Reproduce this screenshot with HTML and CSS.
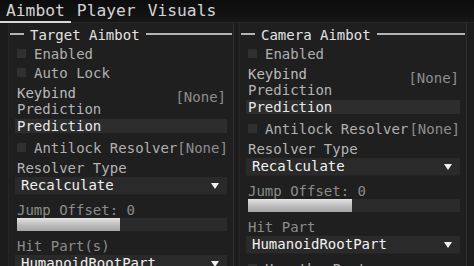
FILE: index.html
```html
<!DOCTYPE html>
<html>
<head>
<meta charset="utf-8">
<link rel="stylesheet" href="styles.css">
</head>
<body>
<div class="tabs">
  <div class="tab active">Aimbot</div>
  <div class="tab">Player</div>
  <div class="tab">Visuals</div>
</div>
<div class="main">
  <div class="group left">
    <div class="gtitle"><span class="gline short"></span><span class="gtext">Target Aimbot</span><span class="gline"></span></div>
    <div class="check"><span class="box"></span><span>Enabled</span></div>
    <div class="check"><span class="box"></span><span>Auto Lock</span></div>
    <div class="keybind"><span>Keybind</span><span class="none">[None]</span></div>
    <div class="label">Prediction</div>
    <div class="input">Prediction</div>
    <div class="check anti"><span class="box"></span><span>Antilock Resolver</span><span class="none push">[None]</span></div>
    <div class="label gap3">Resolver Type</div>
    <div class="drop"><span>Recalculate</span><span class="tri"></span></div>
    <div class="label dim gap7">Jump Offset:&nbsp;0</div>
    <div class="slider"><div class="fill" style="width:49%"></div></div>
    <div class="label dim gap7">Hit Part(s)</div>
    <div class="drop"><span>HumanoidRootPart</span><span class="tri"></span></div>
  </div>
  <div class="group right">
    <div class="gtitle"><span class="gline short"></span><span class="gtext">Camera Aimbot</span><span class="gline"></span></div>
    <div class="check"><span class="box"></span><span>Enabled</span></div>
    <div class="keybind"><span>Keybind</span><span class="none">[None]</span></div>
    <div class="label">Prediction</div>
    <div class="input">Prediction</div>
    <div class="check anti"><span class="box"></span><span>Antilock Resolver</span><span class="none push">[None]</span></div>
    <div class="label gap3">Resolver Type</div>
    <div class="drop"><span>Recalculate</span><span class="tri"></span></div>
    <div class="label dim gap7">Jump Offset:&nbsp;0</div>
    <div class="slider"><div class="fill" style="width:49%"></div></div>
    <div class="label dim gap7">Hit Part</div>
    <div class="drop"><span>HumanoidRootPart</span><span class="tri"></span></div>
    <div class="check anti"><span class="box"></span><span>Use the Part</span></div>
  </div>
</div>
</body>
</html>
```
FILE: styles.css
```css
html, body {
  margin: 0;
  padding: 0;
  background: #1b1b1b;
  width: 474px;
  height: 266px;
  overflow: hidden;
  font-family: "DejaVu Sans Mono", monospace;
}
.tabs {
  display: flex;
  height: 23px;
  background: linear-gradient(#0c0c0c, #161616);
  border-bottom: 1px solid #262626;
  box-sizing: border-box;
}
.tab {
  font-size: 16.3px;
  line-height: 22px;
  padding: 0 6px;
  color: #d4d4d4;
  height: 23px;
  box-sizing: border-box;
}
.tab.active {
  border-bottom: 2px solid #d8d8d8;
}
.main {
  display: flex;
  gap: 5px;
  padding: 0 8px;
  background: #1c1c1c;
  height: 243px;
  overflow: hidden;
}
.group {
  width: 226px;
  display: flex;
  flex-direction: column;
  padding: 1px 6px 0;
  box-sizing: border-box;
  border-left: 1px solid #262626;
  border-right: 1px solid #2e2e2e;
  background: #1f1f1f;
  font-size: 14px;
  color: #b0b0b0;
  flex: none;
  white-space: nowrap;
}
.group > * {
  flex: none;
}
.group.right {
  width: 228px;
}
.gtitle {
  display: flex;
  align-items: center;
  height: 20px;
  margin: 0 -6px;
  padding: 0 1px;
  gap: 6px;
}
.gline {
  flex: 1;
  height: 2px;
  background: #b4b4b4;
}
.gline.short {
  flex: none;
  width: 14px;
}
.gtext {
  color: #e4e4e4;
  line-height: 20px;
  padding-top: 2px;
}
.check {
  display: flex;
  align-items: center;
  height: 19px;
  padding-left: 2px;
}
.box {
  width: 9px;
  height: 9px;
  background: #303030;
  margin-right: 8px;
  flex: none;
}
.check.anti {
  margin-top: 5px;
}
.push {
  margin-left: auto;
}
.none {
  color: #8e8e8e;
}
.keybind {
  display: flex;
  justify-content: space-between;
  height: 16px;
  line-height: 16px;
  margin-top: 3px;
  padding: 0 1px 0 2px;
  color: #bcbcbc;
}
.keybind .none {
  margin-top: 4px;
}
.label {
  height: 16px;
  line-height: 16px;
  padding-left: 2px;
  color: #b4b4b4;
}
.label.dim {
  color: #8c8c8c;
}
.gap3 {
  margin-top: 3px;
}
.gap7 {
  margin-top: 7px;
}
.input {
  margin-top: 2px;
  height: 14px;
  line-height: 14px;
  background: #2d2d2d;
  color: #e8e8e8;
  padding-left: 2px;
}
.drop {
  margin-top: 1px;
  height: 17px;
  line-height: 17px;
  background: #2a2a2a;
  border-bottom: 1px solid #242424;
  color: #f2f2f2;
  padding: 0 8px 0 6px;
  display: flex;
  align-items: center;
  justify-content: space-between;
}
.tri {
  width: 0;
  height: 0;
  border-left: 4px solid transparent;
  border-right: 4px solid transparent;
  border-top: 6px solid #f0f0f0;
}
.slider {
  height: 13px;
  background: #2b2b2b;
  margin: 0 0 0 2px;
}
.fill {
  height: 100%;
  background: linear-gradient(#e4e4e4, #b8b8b8 60%, #a6a6a6);
}
```
